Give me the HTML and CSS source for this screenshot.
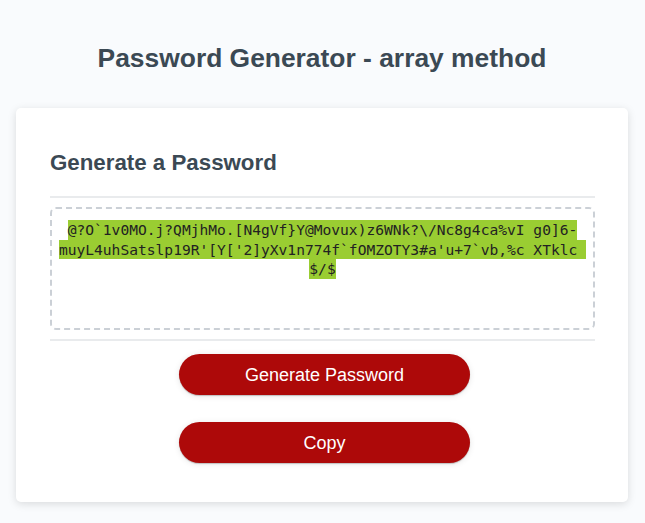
FILE: index.html
```html
<!DOCTYPE html>
<html lang="en">
<head>
<meta charset="UTF-8">
<title>Password Generator - array method</title>
<link rel="stylesheet" href="styles.css">
</head>
<body>
<div class="wrapper">
  <header class="header">
    <h1 class="title">Password Generator - array method</h1>
  </header>
  <div class="card">
    <div class="card-header">
      <h2 class="card-title">Generate a Password</h2>
    </div>
    <div class="card-body">
      <div class="password" id="password">
        <span class="line">@?O`1v0MO.j?QMjhMo.[N4gVf}Y@Movux)z6WNk?\/Nc8g4ca%vI g0]6-</span>
        <span class="line">muyL4uhSatslp19R'[Y['2]yXv1n774f`fOMZOTY3#a'u+7`vb,%c XTklc&nbsp;</span>
        <span class="line">$/$</span>
      </div>
    </div>
    <div class="card-footer">
      <button class="btn" type="button">Generate Password</button>
      <button class="btn btn-copy" type="button">Copy</button>
    </div>
  </div>
</div>
</body>
</html>
```
FILE: styles.css
```css
*, *::before, *::after {
  box-sizing: border-box;
}

html, body {
  margin: 0;
  padding: 0;
}

body {
  background-color: #f9fbfd;
  font-family: "Liberation Sans", Arial, sans-serif;
  color: hsl(206, 17%, 28%);
}

.wrapper {
  padding: 43px 17px 21px 16px;
}

.header {
  text-align: center;
}

.title {
  margin: 0;
  font-size: 26.4px;
  line-height: 30px;
  font-weight: bold;
}

.card {
  margin-top: 35px;
  background-color: #fff;
  border-radius: 5px;
  box-shadow: rgba(0, 0, 0, 0.13) 0 2px 8px 0;
  padding: 42px 33px 39px 34px;
}

.card-header::after {
  content: "";
  display: block;
  height: 2px;
  background: #e9ebed;
  margin-top: 20px;
}

.card-title {
  margin: 0;
  font-size: 22.3px;
  line-height: 26px;
  font-weight: bold;
}

.card-body {
  padding: 9px 0;
}

.password {
  height: 123px;
  border: 2px dashed #cbd0d6;
  border-radius: 6px;
  padding-top: 11px;
  display: flex;
  flex-direction: column;
  align-items: center;
  font-family: "DejaVu Sans Mono", "Liberation Mono", monospace;
  font-size: 14.6px;
  line-height: 19.5px;
  color: #222;
}

.line {
  display: block;
  background: #9acd32;
  white-space: pre;
}

.card-footer {
  display: flex;
  flex-direction: column;
  align-items: center;
}

.card-footer::before {
  content: "";
  display: block;
  align-self: stretch;
  height: 2px;
  background: #e9ebed;
  margin-bottom: 13px;
}

.btn {
  width: 291px;
  height: 41px;
  margin: 0 16px 0 20px;
  border: none;
  border-radius: 25px;
  background-color: #ad0909;
  color: #fff;
  font-family: "Liberation Sans", Arial, sans-serif;
  font-size: 18px;
  line-height: 22px;
  padding: 0;
  box-shadow: rgba(0, 0, 0, 0.1) 0 1px 6px 0, rgba(0, 0, 0, 0.2) 0 1px 1px 0;
  cursor: pointer;
}

.btn-copy {
  margin-top: 27px;
}
```
